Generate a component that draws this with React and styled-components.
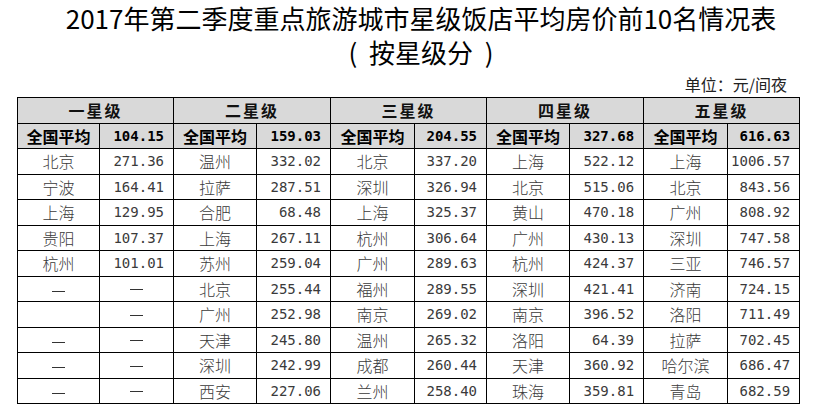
import React from 'react';
import styled, { createGlobalStyle } from 'styled-components';

const GlobalStyle = createGlobalStyle`
    html, body {
        margin: 0;
        padding: 0;
        background: #ffffff;
    }
`;

const Page = styled.div`
    width: 817px;
    height: 415px;
    padding: 0 0 0 17px;
    box-sizing: border-box;
    font-family: "Noto Sans CJK SC", "Noto Sans", sans-serif;
    color: #111;
    overflow: hidden;
`;

const Sheet = styled.div`
    width: 782px;
    display: flex;
    flex-direction: column;
`;

const Heading = styled.div`
    padding: 1px 0 0 26px;
    display: flex;
    flex-direction: column;
    align-items: center;
`;

const TitleLine = styled.div`
    font-size: 26px;
    font-weight: 400;
    line-height: 34px;
    white-space: pre;
    color: #000;
`;

const Unit = styled.div`
    margin-top: 5px;
    padding-right: 12px;
    font-size: 16px;
    line-height: 20px;
    text-align: right;
    color: #222;
`;

const Table = styled.table`
    margin-top: 3px;
    width: 782px;
    border-collapse: collapse;
    table-layout: fixed;

    td {
        border: 1px solid #000;
        padding: 0;
        height: 25.5px;
        box-sizing: border-box;
        white-space: nowrap;
        overflow: hidden;
    }
`;

const HeadCell = styled.td`
    background: #d9d9d9;
    text-align: center;
    font-size: 16px;
    font-weight: 700;
    letter-spacing: 2px;
    line-height: 24px;
`;

const CityCell = styled.td`
    background: ${(p) => (p.$avg ? '#d9d9d9' : '#fff')};
    text-align: center;
    font-size: 16px;
    font-weight: ${(p) => (p.$avg ? 700 : 300)};
    line-height: 24px;
    color: ${(p) => (p.$avg ? '#000' : '#3a3a3a')};
`;

const NumCell = styled.td`
    background: ${(p) => (p.$avg ? '#d9d9d9' : '#fff')};
    text-align: ${(p) => (p.$dash ? 'center' : 'right')};
    padding-right: ${(p) => (p.$dash ? 0 : 9)}px !important;
    font-family: "DejaVu Sans Mono", "Liberation Mono", monospace;
    font-size: 14px;
    font-weight: ${(p) => (p.$avg ? 700 : 400)};
    line-height: 24px;
    color: ${(p) => (p.$avg ? '#000' : '#3a3a3a')};
`;

const Dash = styled.span`
    display: inline-block;
    width: 13px;
    height: 1px;
    background: #333;
    vertical-align: middle;
`;

const colWidths = [82, 74, 83, 74, 84, 72, 83, 74, 84, 72];
const stars = ['一星级', '二星级', '三星级', '四星级', '五星级'];
const averages = ['104.15', '159.03', '204.55', '327.68', '616.63'];

// each row: five [city, price] pairs; '-' marks a dash, '' an empty cell
const rows = [
    [['北京', '271.36'], ['温州', '332.02'], ['北京', '337.20'], ['上海', '522.12'], ['上海', '1006.57']],
    [['宁波', '164.41'], ['拉萨', '287.51'], ['深圳', '326.94'], ['北京', '515.06'], ['北京', '843.56']],
    [['上海', '129.95'], ['合肥', '68.48'], ['上海', '325.37'], ['黄山', '470.18'], ['广州', '808.92']],
    [['贵阳', '107.37'], ['上海', '267.11'], ['杭州', '306.64'], ['广州', '430.13'], ['深圳', '747.58']],
    [['杭州', '101.01'], ['苏州', '259.04'], ['广州', '289.63'], ['杭州', '424.37'], ['三亚', '746.57']],
    [['-', '-'], ['北京', '255.44'], ['福州', '289.55'], ['深圳', '421.41'], ['济南', '724.15']],
    [['', '-'], ['广州', '252.98'], ['南京', '269.02'], ['南京', '396.52'], ['洛阳', '711.49']],
    [['-', '-'], ['天津', '245.80'], ['温州', '265.32'], ['洛阳', '64.39'], ['拉萨', '702.45']],
    [['-', '-'], ['深圳', '242.99'], ['成都', '260.44'], ['天津', '360.92'], ['哈尔滨', '686.47']],
    [['-', '-'], ['西安', '227.06'], ['兰州', '258.40'], ['珠海', '359.81'], ['青岛', '682.59']],
];

export default function App() {
    return (
        <Page>
            <GlobalStyle />
            <Sheet>
                <Heading>
                    <TitleLine>2017年第二季度重点旅游城市星级饭店平均房价前10名情况表</TitleLine>
                    <TitleLine>{'(  按星级分  )'}</TitleLine>
                </Heading>
                <Unit>单位：元/间夜</Unit>
                <Table>
                    <colgroup>
                        {colWidths.map((w, i) => <col key={i} style={{ width: w }} />)}
                    </colgroup>
                    <tbody>
                        <tr>
                            {stars.map((s) => <HeadCell key={s} colSpan={2}>{s}</HeadCell>)}
                        </tr>
                        <tr>
                            {averages.map((a) => (
                                <React.Fragment key={a}>
                                    <CityCell $avg>全国平均</CityCell>
                                    <NumCell $avg>{a}</NumCell>
                                </React.Fragment>
                            ))}
                        </tr>
                        {rows.map((row, r) => (
                            <tr key={r}>
                                {row.map(([city, price], c) => (
                                    <React.Fragment key={c}>
                                        <CityCell>{city === '-' ? <Dash /> : city}</CityCell>
                                        <NumCell $dash={price === '-'}>{price === '-' ? <Dash /> : price}</NumCell>
                                    </React.Fragment>
                                ))}
                            </tr>
                        ))}
                    </tbody>
                </Table>
            </Sheet>
        </Page>
    );
}
